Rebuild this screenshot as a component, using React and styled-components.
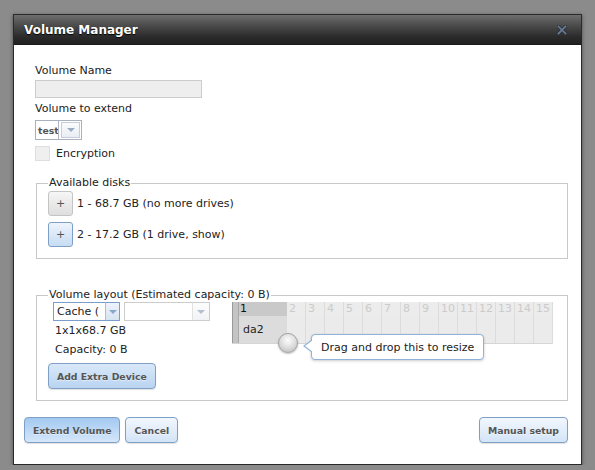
import React from "react";
import styled, { createGlobalStyle } from "styled-components";

const Global = createGlobalStyle`
  html, body { margin: 0; padding: 0; background: #8b8b8b; }
  body { font-family: "DejaVu Sans", Verdana, sans-serif; font-size: 11px; color: #222; }
`;

const Page = styled.div`
  padding: 14px 0 0 13px;
`;

const Dialog = styled.div`
  box-sizing: border-box;
  width: 569px;
  height: 451px;
  background: #fff;
  border: 1px solid #2a2a2a;
  box-shadow: 0 1px 4px rgba(0, 0, 0, 0.45);
  display: flex;
  flex-direction: column;
`;

const TitleBar = styled.div`
  height: 30px;
  flex: none;
  display: flex;
  align-items: center;
  justify-content: space-between;
  padding: 0 14px 0 10px;
  background: linear-gradient(#6e6e6e 0%, #4c4c4c 35%, #2b2b2b 75%, #202020 100%);
  border-bottom: 1px solid #1a1a1a;
  box-sizing: border-box;
`;

const Title = styled.span`
  color: #fff;
  font-weight: bold;
  font-size: 12px;
  text-shadow: 0 1px 1px #000;
`;

const Body = styled.div`
  padding: 19px 13px 0 21px;
`;

const Label = styled.div`
  line-height: 14px;
  margin-top: ${(p) => p.$mt || 0}px;
`;

const TextInput = styled.div`
  box-sizing: border-box;
  width: 167px;
  height: 18px;
  margin-top: 2px;
  background: #eee;
  border: 1px solid #ccc;
`;

const Select = styled.div`
  box-sizing: border-box;
  display: flex;
  width: ${(p) => p.$w}px;
  height: ${(p) => p.$h}px;
  margin-top: ${(p) => p.$mt || 0}px;
  border: 1px solid ${(p) => p.$border};
  background: #fff;
`;

const SelectValue = styled.div`
  flex: 1;
  display: flex;
  align-items: center;
  padding-left: ${(p) => p.$pl || 2}px;
  font-size: ${(p) => (p.$bold ? "9.3px" : "11px")};
  font-weight: ${(p) => (p.$bold ? "bold" : "normal")};
  color: ${(p) => (p.$bold ? "#555" : "#222")};
  border-right: ${(p) => (p.$split ? "1px solid #b0b6c4" : "none")};
  overflow: hidden;
  white-space: nowrap;
`;

const SelectArrow = styled.div`
  box-sizing: border-box;
  width: ${(p) => p.$w}px;
  display: flex;
  align-items: center;
  justify-content: center;
  background: ${(p) => p.$bg};
  border-left: 1px solid ${(p) => p.$line};
  margin: ${(p) => (p.$inset ? "1px 1px 1px 2px" : "0")};
  border: ${(p) => (p.$inset ? `1px solid ${p.$line}` : undefined)};
`;

const Tri = styled.span`
  width: 0;
  height: 0;
  border-left: 4px solid transparent;
  border-right: 4px solid transparent;
  border-top: 4px solid ${(p) => p.$c};
`;

const CheckRow = styled.div`
  display: flex;
  align-items: center;
  gap: 6px;
  margin-top: 5px;
  height: 16px;
`;

const CheckBox = styled.div`
  box-sizing: border-box;
  width: 15px;
  height: 15px;
  background: #efefef;
  border: 1px solid #dedede;
`;

const Fieldset = styled.fieldset`
  margin: ${(p) => p.$mt}px 0 0 1px;
  padding: ${(p) => p.$pt}px 11px 11px 11px;
  border: 1px solid #c8c8c8;
  min-width: 0;
`;

const Legend = styled.legend`
  padding: 0 1px;
  line-height: 14px;
  font-size: 11px;
  color: #222;
`;

const DiskRow = styled.div`
  display: flex;
  align-items: center;
  gap: 4px;
  margin-top: ${(p) => p.$mt || 0}px;
`;

const PlusButton = styled.div`
  box-sizing: border-box;
  width: 25px;
  height: 25px;
  border-radius: 3px;
  display: flex;
  align-items: center;
  justify-content: center;
  font-size: 11px;
  color: #555;
  border: 1px solid ${(p) => (p.$active ? "#7ea0c6" : "#c4c4c4")};
  background: ${(p) =>
    p.$active
      ? "linear-gradient(#eef4fc, #c7dcf3)"
      : "linear-gradient(#f6f6f6, #dedede)"};
`;

const LayoutRow = styled.div`
  display: flex;
  align-items: flex-start;
`;

const LeftCol = styled.div`
  width: 184px;
  flex: none;
`;

const SelectPair = styled.div`
  display: flex;
  gap: 4px;
  margin-left: 5px;
`;

const InfoLine = styled.div`
  line-height: 19px;
  padding-left: 7px;
`;

const Button = styled.div`
  box-sizing: border-box;
  display: inline-flex;
  align-items: center;
  height: ${(p) => p.$h || 26}px;
  padding: 0 8px;
  border: 1px solid #7f9fc4;
  border-radius: 4px;
  font-size: 9.3px;
  font-weight: bold;
  color: #555;
  text-shadow: 0 1px 0 rgba(255, 255, 255, 0.5);
  white-space: nowrap;
  margin-top: ${(p) => p.$mt || 0}px;
  box-shadow: 0 1px 1px rgba(0, 0, 0, 0.12);
  background: ${(p) =>
    p.$primary
      ? "linear-gradient(#a3c9f1, #d5e7fa)"
      : p.$blue
      ? "linear-gradient(#d9e8f9, #b9d4f1)"
      : "linear-gradient(#f2f7fd, #d3e4f7)"};
`;

const GridWrap = styled.div`
  position: relative;
  display: flex;
  width: 321px;
  height: 42px;
  box-sizing: border-box;
  border-bottom: 1px solid #d6d6d6;
`;

const Handle = styled.div`
  width: 5px;
  background: #c4c4c4;
  border-left: 1px solid #9a9a9a;
  border-right: 1px solid #a8a8a8;
`;

const Column = styled.div`
  box-sizing: border-box;
  width: ${(p) => p.$w}px;
  display: flex;
  flex-direction: column;
  border-right: ${(p) => (p.$first ? "none" : "1px solid #dcdcdc")};
`;

const HeadCell = styled.div`
  height: 14px;
  line-height: 14px;
  padding-left: ${(p) => (p.$first ? 1 : 2)}px;
  background: ${(p) => (p.$first ? "#c9c9c9" : "#ececec")};
  color: ${(p) => (p.$first ? "#111" : "#cbcbcb")};
  font-size: 11px;
  white-space: nowrap;
  overflow: hidden;
`;

const BodyCell = styled.div`
  flex: 1;
  display: flex;
  align-items: center;
  padding-left: 4px;
  background: ${(p) => (p.$first ? "#dcdcdc" : "#ebebeb")};
`;

const Knob = styled.div`
  position: absolute;
  left: 46px;
  top: 31px;
  width: 20px;
  height: 20px;
  box-sizing: border-box;
  border-radius: 50%;
  border: 1px solid #a2a2a2;
  background: radial-gradient(circle at 50% 35%, #fcfcfc 0%, #e4e4e4 40%, #b8b8b8 100%);
  box-shadow: 0 1px 2px rgba(0, 0, 0, 0.25);
`;

const Tooltip = styled.div`
  position: absolute;
  left: 79px;
  top: 32px;
  width: 173px;
  height: 26px;
  box-sizing: border-box;
  padding-left: 9px;
  display: flex;
  align-items: center;
  background: #fff;
  border: 1px solid #8fb2d6;
  border-radius: 4px;
  box-shadow: 0 1px 3px rgba(0, 0, 0, 0.2);
  font-size: 11px;
  color: #222;
  white-space: nowrap;

  &::before,
  &::after {
    content: "";
    position: absolute;
    top: 5px;
    width: 0;
    height: 0;
    border-top: 6px solid transparent;
    border-bottom: 6px solid transparent;
  }
  &::before {
    left: -9px;
    border-right: 8px solid #8fb2d6;
  }
  &::after {
    left: -7px;
    border-right: 8px solid #fff;
  }
`;

const Footer = styled.div`
  display: flex;
  align-items: center;
  gap: 5px;
  padding: 0 13px 0 10px;
  margin-top: 16px;
`;

const Spacer = styled.div`
  flex: 1;
`;

const CloseIcon = () => (
  <svg width="10" height="10" viewBox="0 0 10 10">
    <path d="M1.5 1.5 L8.5 8.5 M8.5 1.5 L1.5 8.5" stroke="#2e3540" strokeWidth="3.4" strokeLinecap="square" />
    <path d="M1.5 1.5 L8.5 8.5 M8.5 1.5 L1.5 8.5" stroke="#6d7c93" strokeWidth="1.6" strokeLinecap="square" />
  </svg>
);

const slots = Array.from({ length: 14 }, (_, i) => i + 2);

export default function App() {
  return (
    <>
      <Global />
      <Page>
        <Dialog>
          <TitleBar>
            <Title>Volume Manager</Title>
            <CloseIcon />
          </TitleBar>
          <Body>
            <Label>Volume Name</Label>
            <TextInput />
            <Label $mt={4}>Volume to extend</Label>
            <Select $w={47} $h={20} $mt={4} $border="#a9b0c0">
              <SelectValue $bold $split>test</SelectValue>
              <SelectArrow $w={19} $inset $line="#c6ccd8" $bg="linear-gradient(#fbfbfb, #e9edf3)">
                <Tri $c="#9aabc6" />
              </SelectArrow>
            </Select>
            <CheckRow>
              <CheckBox />
              <span>Encryption</span>
            </CheckRow>

            <Fieldset $mt={15} $pt={1}>
              <Legend>Available disks</Legend>
              <DiskRow>
                <PlusButton>+</PlusButton>
                <span>1 - 68.7 GB (no more drives)</span>
              </DiskRow>
              <DiskRow $mt={6}>
                <PlusButton $active>+</PlusButton>
                <span>2 - 17.2 GB (1 drive, show)</span>
              </DiskRow>
            </Fieldset>

            <Fieldset $mt={29} $pt={0}>
              <Legend>Volume layout (Estimated capacity: 0 B)</Legend>
              <LayoutRow>
                <LeftCol>
                  <SelectPair>
                    <Select $w={67} $h={19} $border="#7b9dcc">
                      <SelectValue $pl={3}>Cache (</SelectValue>
                      <SelectArrow $w={14} $line="#a8bedc" $bg="linear-gradient(#eef3fa, #d7e3f2)">
                        <Tri $c="#8ba6cc" />
                      </SelectArrow>
                    </Select>
                    <Select $w={86} $h={19} $border="#cdcdcd">
                      <SelectValue />
                      <SelectArrow $w={17} $line="#e2e2e2" $bg="linear-gradient(#fdfdfd, #f0f2f5)">
                        <Tri $c="#b4bfcf" />
                      </SelectArrow>
                    </Select>
                  </SelectPair>
                  <InfoLine>1x1x68.7 GB</InfoLine>
                  <InfoLine>Capacity: 0 B</InfoLine>
                  <Button $blue $mt={4}>Add Extra Device</Button>
                </LeftCol>
                <GridWrap>
                  <Handle />
                  <Column $w={48} $first>
                    <HeadCell $first>1</HeadCell>
                    <BodyCell $first>da2</BodyCell>
                  </Column>
                  {slots.map((n) => (
                    <Column key={n} $w={19}>
                      <HeadCell>{n}</HeadCell>
                      <BodyCell />
                    </Column>
                  ))}
                  <Knob />
                  <Tooltip>Drag and drop this to resize</Tooltip>
                </GridWrap>
              </LayoutRow>
            </Fieldset>
          </Body>
          <Footer>
            <Button $primary>Extend Volume</Button>
            <Button>Cancel</Button>
            <Spacer />
            <Button>Manual setup</Button>
          </Footer>
        </Dialog>
      </Page>
    </>
  );
}
